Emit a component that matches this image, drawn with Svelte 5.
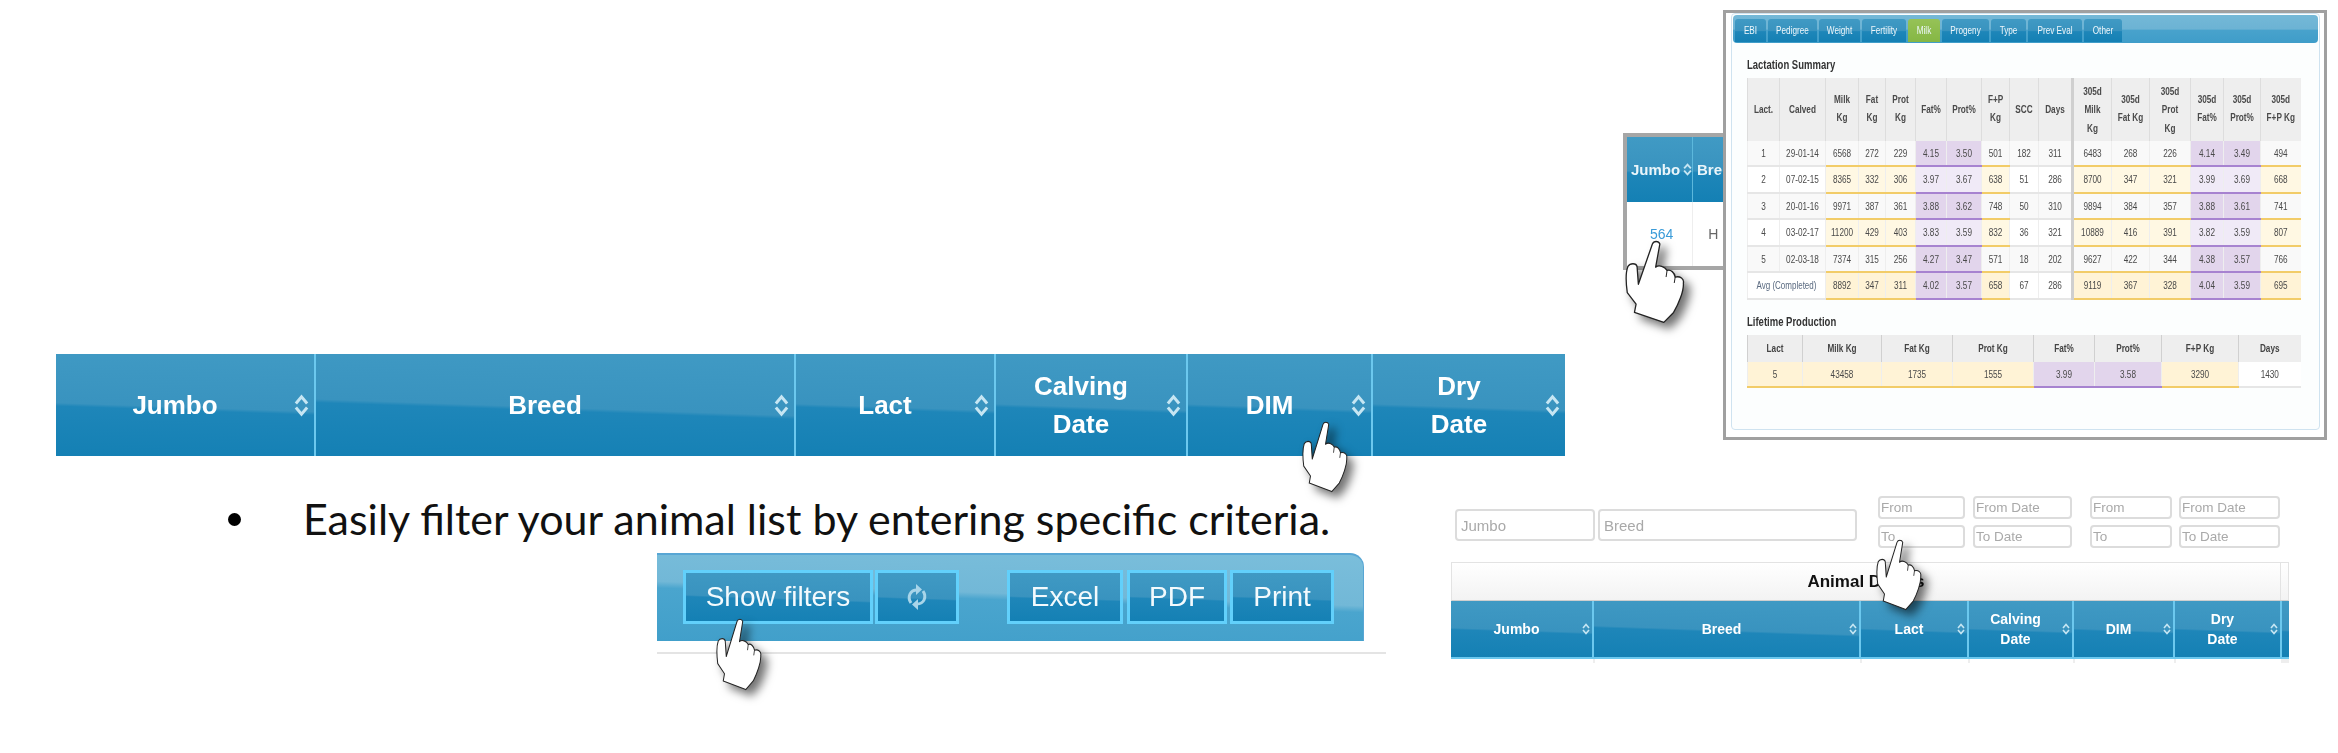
<script>
	const mainCols = [
		{ w: 260, label: 'Jumbo' },
		{ w: 480, label: 'Breed' },
		{ w: 200, label: 'Lact' },
		{ w: 192, label: 'Calving\nDate' },
		{ w: 185, label: 'DIM' },
		{ w: 192, label: 'Dry\nDate' }
	];
	const smallCols = [
		{ w: 143, label: 'Jumbo' },
		{ w: 267, label: 'Breed' },
		{ w: 108, label: 'Lact' },
		{ w: 105, label: 'Calving\nDate' },
		{ w: 101, label: 'DIM' },
		{ w: 107, label: 'Dry\nDate' },
		{ w: 7 }
	];

	const tabs = [
		{ name: 'EBI', w: 31 },
		{ name: 'Pedigree', w: 49 },
		{ name: 'Weight', w: 41 },
		{ name: 'Fertility', w: 44 },
		{ name: 'Milk', w: 32, on: true },
		{ name: 'Progeny', w: 47 },
		{ name: 'Type', w: 35 },
		{ name: 'Prev Eval', w: 54 },
		{ name: 'Other', w: 38 }
	];

	const lactWidths = [32, 46, 33, 27, 30, 31, 35, 28, 29, 34, 39, 38, 41, 33, 37, 40];
	const lactHead = ['Lact.', 'Calved', 'Milk\nKg', 'Fat\nKg', 'Prot\nKg', 'Fat%', 'Prot%', 'F+P\nKg', 'SCC', 'Days',
		'305d\nMilk\nKg', '305d\nFat Kg', '305d\nProt\nKg', '305d\nFat%', '305d\nProt%', '305d\nF+P Kg'];
	const kinds = ['', '', 'y', 'y', 'y', 'p', 'p', 'y', '', '', 'y', 'y', 'y', 'p', 'p', 'y'];
	const lactRows = [
		{ cls: 'odd', h: 25, v: ['1', '29-01-14', '6568', '272', '229', '4.15', '3.50', '501', '182', '311', '6483', '268', '226', '4.14', '3.49', '494'] },
		{ cls: 'even', h: 27, v: ['2', '07-02-15', '8365', '332', '306', '3.97', '3.67', '638', '51', '286', '8700', '347', '321', '3.99', '3.69', '668'] },
		{ cls: 'odd', h: 26, v: ['3', '20-01-16', '9971', '387', '361', '3.88', '3.62', '748', '50', '310', '9894', '384', '357', '3.88', '3.61', '741'] },
		{ cls: 'even', h: 27, v: ['4', '03-02-17', '11200', '429', '403', '3.83', '3.59', '832', '36', '321', '10889', '416', '391', '3.82', '3.59', '807'] },
		{ cls: 'odd', h: 26, v: ['5', '02-03-18', '7374', '315', '256', '4.27', '3.47', '571', '18', '202', '9627', '422', '344', '4.38', '3.57', '766'] },
		{ cls: 'avg', h: 27, v: ['Avg (Completed)', '8892', '347', '311', '4.02', '3.57', '658', '67', '286', '9119', '367', '328', '4.04', '3.59', '695'] }
	];

	const lifeCols = [
		{ w: 55, label: 'Lact', v: '5', k: 'y' },
		{ w: 79, label: 'Milk Kg', v: '43458', k: 'y' },
		{ w: 71, label: 'Fat Kg', v: '1735', k: 'y' },
		{ w: 81, label: 'Prot Kg', v: '1555', k: 'y' },
		{ w: 61, label: 'Fat%', v: '3.99', k: 'p' },
		{ w: 67, label: 'Prot%', v: '3.58', k: 'p' },
		{ w: 77, label: 'F+P Kg', v: '3290', k: 'y' },
		{ w: 62, label: 'Days', v: '1430', k: '' }
	];
</script>

{#snippet sortIcon()}
	<svg class="sort" viewBox="0 0 16 24" preserveAspectRatio="none" aria-hidden="true">
		<path d="M2 10 L8 3 L14 10 M2 14 L8 21 L14 14" />
	</svg>
{/snippet}

{#snippet strip(cols, cls)}
	<div class="strip {cls}">
		{#each cols as col}
			<div class="strip-cell" style="width:{col.w}px">
				{#if col.label}
					<span class="strip-label">{col.label}</span>
					{@render sortIcon()}
				{/if}
			</div>
		{/each}
	</div>
{/snippet}

{#snippet hand(cls)}
	<svg class="hand {cls}" viewBox="-4 -4 184 254" preserveAspectRatio="none" aria-hidden="true">
		<path d="M80 8 C84 -2 99 -2 103 8 L90 78 C100 70 118 76 125 88 C136 84 148 95 150 108 C165 104 178 114 175 126 C177 150 160 190 145 215 L115 245 L25 215 L30 190 L3 155 C-2 120 0 88 5 76 C12 65 30 65 33 76 L37 130 Z" />
		<path d="M125 88 L122 108 M150 108 L147 126" />
	</svg>
{/snippet}

<div class="page">
	<section class="top">
		{@render strip(mainCols, 'main')}

		<div class="popup-wrap">
			<div class="mini">
				<div class="mini-head">
					<div class="mini-cell"><span>Jumbo</span>{@render sortIcon()}</div>
					<div class="mini-cell">Bre</div>
				</div>
				<div class="mini-body">
					<a class="mini-link" href="#564">564</a>
					<span class="mini-h">H</span>
				</div>
			</div>

			<div class="popup">
				<div class="panel">
					<nav class="tabbar">
						{#each tabs as tab}
							<span class="tab" class:on={tab.on} style="width:{tab.w}px"><span class="t">{tab.name}</span></span>
						{/each}
					</nav>

					<h3>Lactation Summary</h3>
					<table class="lact">
						<colgroup>
							{#each lactWidths as w}
								<col style="width:{w}px" />
							{/each}
						</colgroup>
						<thead>
							<tr>
								{#each lactHead as head, i}
									<th class:split={i === 10}><span class="t">{head}</span></th>
								{/each}
							</tr>
						</thead>
						<tbody>
							{#each lactRows as row}
								<tr class={row.cls} style="height:{row.h}px">
									{#if row.cls === 'avg'}
										<td colspan="2" class="avg-label"><span class="t">{row.v[0]}</span></td>
										{#each row.v.slice(1) as val, i}
											<td class={kinds[i + 2]} class:split={i === 8}><span class="t">{val}</span></td>
										{/each}
									{:else}
										{#each row.v as val, i}
											<td class={kinds[i]} class:split={i === 10}><span class="t">{val}</span></td>
										{/each}
									{/if}
								</tr>
							{/each}
						</tbody>
					</table>

					<h3>Lifetime Production</h3>
					<table class="life">
						<colgroup>
							{#each lifeCols as col}
								<col style="width:{col.w}px" />
							{/each}
						</colgroup>
						<thead>
							<tr>
								{#each lifeCols as col}
									<th><span class="t">{col.label}</span></th>
								{/each}
							</tr>
						</thead>
						<tbody>
							<tr>
								{#each lifeCols as col}
									<td class={col.k}><span class="t">{col.v}</span></td>
								{/each}
							</tr>
						</tbody>
					</table>
				</div>
			</div>
		</div>
	</section>

	<section class="bottom">
		<div class="left">
			<ul class="bullets">
				<li>Easily filter your animal list by entering specific criteria.</li>
			</ul>

			<div class="toolbar">
				<div class="btn-group">
					<button class="show">Show filters</button>
					<button class="refresh" aria-label="Refresh">
						<svg viewBox="0 0 22 26" aria-hidden="true">
							<path class="arc" d="M5 19 C1 13 4 6 11 6 M17 7 C21 13 18 20 11 20" />
							<path class="tip" d="M10 0 L16 5.5 L10 11 Z M12 15 L6 20.5 L12 26 Z" />
						</svg>
					</button>
				</div>
				<div class="btn-group">
					<button class="excel">Excel</button>
					<button class="pdf">PDF</button>
					<button class="print">Print</button>
				</div>
			</div>
			<div class="rule"></div>
		</div>

		<div class="right">
			<div class="filters">
				<input class="f-jumbo" placeholder="Jumbo" />
				<input class="f-breed" placeholder="Breed" />
				<div class="pair first">
					<input class="n1" placeholder="From" />
					<input class="d1" placeholder="From Date" />
					<input class="n1" placeholder="To" />
					<input class="d1" placeholder="To Date" />
				</div>
				<div class="pair second">
					<input class="n2" placeholder="From" />
					<input class="d2" placeholder="From Date" />
					<input class="n2" placeholder="To" />
					<input class="d2" placeholder="To Date" />
				</div>
			</div>
			<div class="band">
				<span class="band-title">Animal Details</span>
				<span class="band-end"></span>
			</div>
			{@render strip(smallCols, 'small')}
			<div class="stubs"></div>
		</div>
	</section>

	{@render hand('h-jumbo')}
	{@render hand('h-dim')}
	{@render hand('h-show')}
	{@render hand('h-to')}
</div>

<style>
	:global(body) {
		background: #fff;
	}

	.page {
		position: relative;
		width: 2338px;
		height: 753px;
		overflow: hidden;
		font-family: "Liberation Sans", Arial, sans-serif;
	}

	.top {
		display: flex;
		align-items: flex-start;
		height: 456px;
		box-sizing: border-box;
		padding-left: 56px;
	}

	/* blue sortable header, big and small copies */
	.strip {
		display: flex;
		flex: none;
		color: #fff;
		font-weight: bold;
		filter: blur(0.4px);
	}

	.strip.main {
		margin-top: 354px;
		height: 102px;
		font-size: 26px;
		line-height: 38px;
	}

	.strip.small {
		height: 58px;
		font-size: 14px;
		line-height: 20px;
	}

	.strip-cell {
		display: flex;
		align-items: center;
		box-sizing: border-box;
		background: linear-gradient(182deg, #409ac4 0%, #3993bf 52%, #1e86b9 55%, #1480b4 100%);
		border-right: 2px solid #6cc8ee;
	}

	.strip-cell:last-child {
		border-right: 0;
	}

	.strip.small .strip-cell {
		border-bottom: 2px solid #6cc8ee;
	}

	.strip-label {
		flex: 1;
		min-width: 0;
		text-align: center;
		white-space: pre-line;
	}

	.sort {
		flex: none;
		width: 15px;
		height: 23px;
		margin-right: 5px;
	}

	.sort path {
		fill: none;
		stroke: #c6e6f3;
		stroke-width: 3.2;
	}

	.strip.small .sort {
		width: 8px;
		height: 12px;
		margin-right: 2px;
	}

	/* pasted popup with the clipped table behind it */
	.popup-wrap {
		position: relative;
		flex: none;
		margin: 10px 0 0 158px;
	}

	.mini {
		position: absolute;
		left: -100px;
		top: 123px;
		width: 110px;
		height: 137px;
		box-sizing: border-box;
		border: 4px solid #a6a6a6;
		background: #fff;
		filter: blur(0.5px);
		overflow: hidden;
	}

	.mini-head {
		display: flex;
		height: 65px;
		background: linear-gradient(180deg, #409ac4 0%, #3993bf 52%, #1e86b9 55%, #1480b4 100%);
		color: #e9f5fa;
		font-size: 15px;
		font-weight: bold;
	}

	.mini-cell {
		display: flex;
		align-items: center;
		gap: 3px;
		padding-left: 4px;
		white-space: nowrap;
	}

	.mini-cell:first-child {
		flex: none;
		width: 66px;
		box-sizing: border-box;
		border-right: 1px solid #5cb8dc;
	}

	.mini-cell .sort {
		width: 9px;
		height: 13px;
		margin: 0;
	}

	.mini-body {
		display: flex;
		align-items: center;
		height: 64px;
		font-size: 14px;
		background: linear-gradient(90deg, #fff 65px, #eee 65px, #eee 66px, #fff 66px);
	}

	.mini-link {
		margin-left: 23px;
		color: #3a9bd8;
		text-decoration: none;
	}

	.mini-h {
		margin-left: 35px;
		color: #666;
	}

	.popup {
		position: relative;
		width: 604px;
		height: 430px;
		box-sizing: border-box;
		border: 3px solid #a0a0a0;
		padding: 0 4px 7px 5px;
		background: #fff;
	}

	.panel {
		height: 100%;
		box-sizing: border-box;
		padding: 1px 1px 0;
		border: 1px solid #cfe3f0;
		border-radius: 4px;
		background: #fcfefe;
		color: #333;
		font-size: 8.2px;
		filter: blur(0.45px);
	}

	/* the popup is a squeezed clipping: letters are narrow and tall */
	.t {
		display: inline-block;
		transform: scaleY(1.35);
		white-space: pre-line;
	}

	.tabbar {
		display: flex;
		gap: 2px;
		height: 28px;
		box-sizing: border-box;
		padding: 4px 2px 1px;
		border-radius: 4px;
		background: linear-gradient(180deg, #74b8d7 0%, #6cb3d4 50%, #48a2cc 55%, #3f9dc9 100%);
	}

	.tab {
		display: flex;
		align-items: center;
		justify-content: center;
		border-radius: 3px 3px 0 0;
		color: #eef7fb;
		background: linear-gradient(180deg, #409ac4 0%, #3993bf 50%, #1e86b9 55%, #1480b4 100%);
	}

	.tab.on {
		background: linear-gradient(180deg, #96c257, #85b744);
	}

	h3 {
		margin: 15px 0 7px 14px;
		font-size: 9.5px;
		line-height: 13px;
		font-weight: bold;
		color: #333;
		transform: scaleY(1.25);
	}

	table {
		margin-left: 14px;
		table-layout: fixed;
		border-collapse: collapse;
		width: 553px;
	}

	th {
		background: #eee;
		font-weight: bold;
		text-align: center;
		padding: 0;
		border-left: 1px solid #ddd;
		color: #4a4a4a;
	}

	.lact th {
		height: 63px;
		line-height: 13.3px;
	}

	td {
		text-align: center;
		padding: 0;
		border-left: 1px solid #eee;
		border-bottom: 2px solid #e6e6e6;
		background: #fff;
		color: #4a4a4a;
	}

	tr.odd td {
		background: #f9f9f9;
	}

	td.y {
		background: #fff8e3;
		border-bottom-color: #f2cc68;
	}

	td.p {
		background: #f0eaf7;
		border-bottom-color: #a783d0;
	}

	tr.odd td.y {
		background: #f9f9f9;
	}

	tr.odd td.p,
	tr.avg td.p,
	.life td.p {
		background: #e2d5ec;
	}

	tr.avg td.y,
	.life td.y {
		background: #fff3d6;
	}

	.avg-label {
		font-size: 8px;
		color: #5a6a80;
	}

	.split {
		border-left: 3px solid #cfcfcf;
	}

	.life th {
		height: 27px;
		color: #444;
		border-left-color: #d0d0d0;
	}

	.life td {
		height: 24px;
	}

	.bottom {
		display: flex;
		align-items: flex-start;
	}

	.left {
		flex: none;
		width: 1395px;
		padding-top: 42px;
	}

	.bullets {
		margin: 0;
		padding-left: 228px;
		list-style: none;
		font-family: Lato, "Open Sans", sans-serif;
		font-size: 43px;
		line-height: 42px;
		color: #111;
		white-space: nowrap;
	}

	.bullets li {
		display: flex;
		align-items: center;
	}

	.bullets li::before {
		content: "";
		flex: none;
		width: 13px;
		height: 13px;
		margin-right: 62px;
		border-radius: 50%;
		background: #000;
	}

	.toolbar {
		display: flex;
		gap: 48px;
		margin: 13px 0 0 657px;
		width: 707px;
		height: 88px;
		box-sizing: border-box;
		padding: 15px 0 0 26px;
		border-top: 2px solid #58a6d4;
		border-right: 1px solid #58a6d4;
		border-radius: 0 14px 0 0;
		background: linear-gradient(182deg, #7abedb 0%, #72b8d7 46%, #4aa5ce 52%, #419fca 100%);
	}

	.btn-group {
		display: flex;
		gap: 2px;
		height: 54px;
	}

	button {
		box-sizing: border-box;
		height: 54px;
		padding: 0;
		border: 3px solid #62d0fb;
		color: #f3fafd;
		font-family: "Liberation Sans", Arial, sans-serif;
		font-size: 28px;
		background: linear-gradient(182deg, #409ac4 0%, #3993bf 52%, #1e86b9 55%, #1480b4 100%);
		filter: blur(0.3px);
	}

	.show { width: 190px; }
	.refresh { width: 84px; }
	.excel { width: 116px; }
	.pdf { width: 100px; margin-left: 2px; }
	.print { width: 104px; margin-left: 1px; }

	.refresh svg {
		display: block;
		width: 22px;
		height: 26px;
		margin: 0 auto;
	}

	.refresh .arc {
		fill: none;
		stroke: #a8d5e9;
		stroke-width: 3;
	}

	.refresh .tip {
		fill: #a8d5e9;
	}

	.rule {
		width: 729px;
		height: 2px;
		margin: 11px 0 0 657px;
		background: #e4e4e4;
	}

	.right {
		flex: none;
		width: 838px;
		margin-left: 56px;
		padding-top: 40px;
	}

	.filters {
		display: flex;
		align-items: flex-start;
		height: 66px;
	}

	input {
		box-sizing: border-box;
		height: 23px;
		margin: 0;
		padding: 0 1px;
		border: 2px solid #dcdcdc;
		border-radius: 4px;
		background: #fff;
		font-family: "Liberation Sans", Arial, sans-serif;
		font-size: 13.5px;
		filter: blur(0.3px);
	}

	input::placeholder {
		color: #a9a9a9;
		opacity: 1;
	}

	.f-jumbo,
	.f-breed {
		height: 32px;
		margin-top: 13px;
		font-size: 15px;
		padding: 0 4px;
	}

	.f-jumbo {
		width: 140px;
		margin-left: 4px;
	}

	.f-breed {
		width: 259px;
		margin-left: 3px;
	}

	.pair {
		display: grid;
		row-gap: 6px;
	}

	.pair.first {
		grid-template-columns: 87px 99px;
		column-gap: 8px;
		margin-left: 21px;
	}

	.pair.second {
		grid-template-columns: 82px 101px;
		column-gap: 7px;
		margin-left: 18px;
	}

	.band {
		display: flex;
		height: 39px;
		box-sizing: border-box;
		border: 1px solid #e3e3e3;
		border-bottom-color: #cfcfcf;
		background: linear-gradient(180deg, #fff, #f3f3f3);
		font-size: 17px;
		font-weight: bold;
		color: #111;
	}

	.band-title {
		flex: 1;
		line-height: 37px;
		text-align: center;
		filter: blur(0.3px);
	}

	.band-end {
		width: 7px;
		border-left: 1px solid #e3e3e3;
	}

	.stubs {
		height: 4px;
		background: linear-gradient(90deg, transparent 142px, #eee 142px, #eee 144px, transparent 144px,
			transparent 409px, #eee 409px, #eee 411px, transparent 411px,
			transparent 517px, #eee 517px, #eee 519px, transparent 519px,
			transparent 622px, #eee 622px, #eee 624px, transparent 624px,
			transparent 723px, #eee 723px, #eee 725px, transparent 725px,
			transparent 830px, #eee 830px, #eee 838px);
	}

	/* pointer hands laid over the clippings */
	.hand {
		position: absolute;
		overflow: visible;
		filter: drop-shadow(6px 6px 5px rgba(0, 0, 0, 0.55));
	}

	.hand path:first-child {
		fill: #fff;
		stroke: #222;
		stroke-width: 4;
		stroke-linejoin: round;
	}

	.hand path:last-child {
		fill: none;
		stroke: #222;
		stroke-width: 3;
	}

	.h-jumbo {
		left: 1625px;
		top: 240px;
		width: 60px;
		height: 84px;
	}

	.h-dim {
		left: 1302px;
		top: 421px;
		width: 46px;
		height: 72px;
	}

	.h-show {
		left: 716px;
		top: 618px;
		width: 46px;
		height: 73px;
	}

	.h-to {
		left: 1876px;
		top: 539px;
		width: 46px;
		height: 72px;
	}
</style>
